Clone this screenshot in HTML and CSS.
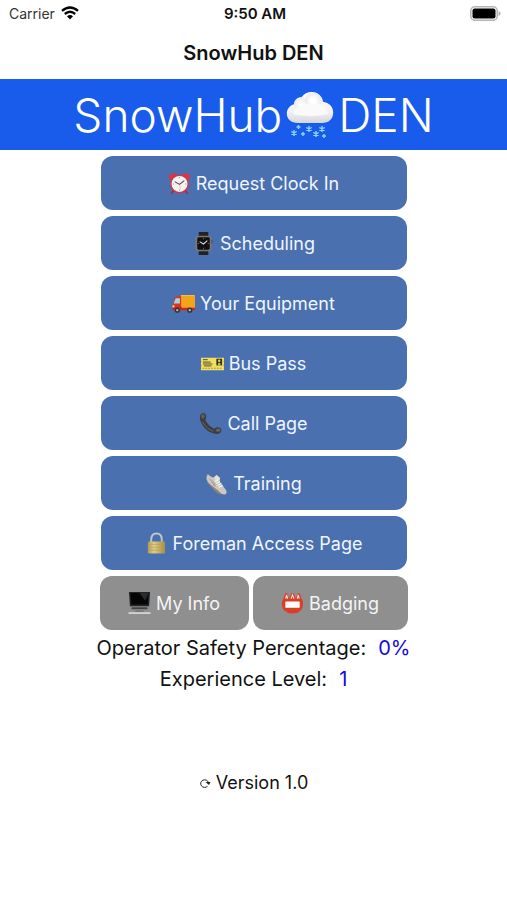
FILE: index.html
```html
<!DOCTYPE html>
<html lang="en">
<head>
<meta charset="utf-8">
<meta name="viewport" content="width=device-width, initial-scale=1">
<title>SnowHub DEN</title>
<link rel="stylesheet" href="styles.css">
</head>
<body>
<div class="status">
  <div class="carrier">
    <span>Carrier</span>
    <svg class="wifi" viewBox="0 0 18 14" aria-hidden="true">
      <path d="M1 4.9Q9-2 17 4.9M3.8 8Q9 3.6 14.2 8" fill="none" stroke="#000" stroke-width="2.3"/>
      <path d="M6 10.3Q9 7.9 12 10.3L9 13.4Z"/>
    </svg>
  </div>
  <time class="clock">9:50 AM</time>
  <svg class="battery" viewBox="0 0 31 15" aria-hidden="true">
    <rect x=".8" y=".8" width="26.4" height="13.4" rx="4" fill="#fff" stroke="#b4b4b4" stroke-width="1.5"/>
    <rect x="2.5" y="2.5" width="23" height="10" rx="2"/>
    <path d="M28.5 5q2.2 1 2.2 2.5t-2.2 2.5z" fill="#b4b4b4"/>
  </svg>
</div>
<header class="nav"><h1>SnowHub DEN</h1></header>
<div class="banner">
  <span>SnowHub</span>
  <svg class="cloud" viewBox="0 0 48 48" aria-hidden="true">
    <defs>
      <linearGradient id="cloudFill" x1="0" y1="0" x2="0" y2="1"><stop offset="0" stop-color="#fff"/><stop offset=".65" stop-color="#f1f1f3"/><stop offset="1" stop-color="#d5d6dc"/></linearGradient>
      <radialGradient id="puff"><stop offset=".3" stop-color="#fff"/><stop offset="1" stop-color="#e9e9ed"/></radialGradient>
    </defs>
    <path d="M12 32C5 32 .8 28 .8 22.500c0-4.500 3-8 7.200-9.300C8.500 8.500 12 6 15.500 6.300 18 2.700 22 .8 26 1c6 .2 10.500 4.500 11 9.800 6 .7 10.200 5 10.200 10.700C47.200 28 42.500 32 36 32z" fill="url(#cloudFill)"/>
    <circle cx="27" cy="10" r="8.500" fill="url(#puff)"/>
    <ellipse cx="15" cy="13" rx="7" ry="6" fill="url(#puff)"/>
    <path d="M8 20q3-5 9-4 5-6 12-3 6-2 10 3l3 7q-17 4-35 0z" fill="#fafafa"/>
    <g stroke="#8fd4ff" stroke-width="1.400">
      <path id="flake" d="M8 39v6M5.300 40.500l5.400 3M5.300 43.500l5.400-3"/>
      <use href="#flake" x="15" y="-4"/><use href="#flake" x="28" y="-4"/><use href="#flake" x="22" y="1"/>
      <path d="M12.500 34v4M10.500 36h4M17 41v4M15 43h4M38 43v4M36 45h4"/>
    </g>
  </svg>
  <span>DEN</span>
</div>
<main class="main">
  <nav class="menu">
    <button class="btn" type="button">
      <svg class="icon" viewBox="0 0 24 24" aria-hidden="true">
        <path d="M6 19l-2.500 4M18 19l2.500 4" stroke="#9b3440" stroke-width="1.800"/>
        <path d="M1 7C0 3 4 0 9 2L3 8zM23 7c1-4-3-7-8-5l6 6z" fill="#dc3548"/>
        <circle cx="12" cy="12.500" r="9.800" fill="#d5354a"/><circle cx="12" cy="12.500" r="8.300" fill="#f4f3ef"/>
        <path d="M12 5.500v1M12 18.500v1M5 12.500h1M18 12.500h1" stroke="#888" stroke-width="1"/>
        <path d="M7 10l5 3 5-4" fill="none" stroke="#464646" stroke-width="1.100"/><path d="M12 13l1 5" stroke="#d99" stroke-width=".6"/>
      </svg><span>Request Clock In</span></button>
    <button class="btn" type="button">
      <svg class="icon" viewBox="0 0 24 24" aria-hidden="true">
        <path d="M7 0h10v24H7z" fill="#202226"/><rect x="3.500" y="4" width="17" height="16" rx="3" fill="#78787a"/><rect x="5.500" y="5.500" width="13" height="13" rx="1.500" fill="#111"/>
        <path d="M20 8h1.500v4H20z" fill="#555"/><path d="M8 10l4 2.500 4-3.500" fill="none" stroke="#ddd" stroke-width="1.100"/>
        <path d="M12 6.500v1M12 16.500v1M6.500 12h1M16.500 12h1" stroke="#999" stroke-width=".8"/>
      </svg><span>Scheduling</span></button>
    <button class="btn" type="button">
      <svg class="icon" viewBox="0 0 24 24" aria-hidden="true">
        <path d="M9 4l1-1h13l1 1v13H9z" fill="#f2a51c"/><path d="M9 4l1-1h13l1 1z" fill="#ffc24a"/><path d="M3 6q.5-1.500 2-1.500h4.500V19H1v-6z" fill="#d93624"/><path d="M3.800 6.500h4.500V12H1.800z" fill="#a5d3df"/>
        <path d="M.5 15h9l1 1.500H24V19H.5z" fill="#ca281d"/><path d="M.5 14h2v2h-2z" fill="#ffe28a"/>
        <g fill="#34353a"><circle cx="5.500" cy="19" r="2.700"/><circle cx="18.500" cy="19" r="2.700"/></g><g fill="#b9babe"><circle cx="5.500" cy="19" r="1.200"/><circle cx="18.500" cy="19" r="1.200"/></g>
      </svg><span>Your Equipment</span></button>
    <button class="btn" type="button">
      <svg class="icon" viewBox="0 0 24 24" aria-hidden="true">
        <path d="M0 6h24v3q-1 1 0 2v2q-1 1 0 2v4H0v-4q1-1 0-2v-2q1-1 0-2z" fill="#f0df61"/>
        <path d="M2 8h5M2 10.500h8M2 12.500h10M3 14.500h8" stroke="#4e4a2f" stroke-width="1"/><path d="M1.500 17h21" stroke="#a89c3c" stroke-width="1" stroke-dasharray="2 1"/>
        <path d="M16 7h6v7h-6z" fill="#37351f"/><circle cx="19" cy="9.200" r="1.300" fill="#e0d05a"/><path d="M17.500 14q0-3 1.500-3t1.500 3" fill="#c5b64d"/>
      </svg><span>Bus Pass</span></button>
    <button class="btn" type="button">
      <svg class="icon" viewBox="0 0 24 24" aria-hidden="true">
        <path d="M1 4Q2 1 5 1q3 1 2.500 5L6.500 8Q9 14 16 17.500l2-1.500q5-.5 5.500 3-.5 3-4 4Q6 22 1 8z" fill="#3b3d40"/>
        <ellipse cx="4" cy="4.500" rx="2" ry="2.500" fill="#595b5e"/><ellipse cx="20" cy="19" rx="2.300" ry="1.700" fill="#626467"/><path d="M3.500 10Q8 18 15 20" fill="none" stroke="#66686b" stroke-width="1"/>
      </svg><span>Call Page</span></button>
    <button class="btn" type="button">
      <svg class="icon" viewBox="0 0 24 24" aria-hidden="true">
        <path d="M3 2q2 3 6 4l3-3 3.500 3v4l6.500 9q1.500 3-1 4.500-3 .5-6-2L3 11Q0 6 3 2z" fill="#cbc8bf"/>
        <path d="M2 8q2 5 7 8t9 7.500q-4 0-7-3L3 12z" fill="#8a8378"/><path d="M9 6l3-3 3.500 3L15 8l-3 1z" fill="#e3e1da"/>
        <path d="M10 10l4-2M11.500 12l4-2M13 14l4-2M14.500 16l4-2" stroke="#f8f7f4" stroke-width="1.100"/><path d="M5 7l5 8M8 9l3 6" stroke="#969188" stroke-width=".8"/>
      </svg><span>Training</span></button>
    <button class="btn" type="button">
      <svg class="icon" viewBox="0 0 24 24" aria-hidden="true">
        <path d="M6.500 11V8q0-6.500 5.500-6.500T17.500 8v3" fill="none" stroke="#bfc5c8" stroke-width="2"/>
        <defs><linearGradient id="brass"><stop stop-color="#b39b4e"/><stop offset=".35" stop-color="#ddce88"/><stop offset="1" stop-color="#a58d43"/></linearGradient></defs>
        <rect x="3" y="10" width="18" height="12.500" rx="1.500" fill="url(#brass)"/><path d="M4 13h16M4 16h16M4 19h16" stroke="#b59c50" stroke-width=".6"/>
      </svg><span>Foreman Access Page</span></button>
    <div class="pair">
      <button class="btn gray info" type="button">
        <svg class="icon" viewBox="0 0 24 24" aria-hidden="true">
          <path d="M1 0h22l-1 15H2z" fill="#242424"/><path d="M2.500 1h19l-1 12h-17z" fill="#050505"/><path d="M12 1h9.500L18 9z" fill="#292b2d"/>
          <path d="M2 15h20l1.500 6H.5z" fill="#8d8f90"/><path d="M4 16h16l.5 2h-17z" fill="#444"/><path d="M8 19h8l.5 2h-9z" fill="#777"/><path d="M.5 21h23v2H.5z" fill="#d0d1d1"/>
        </svg><span>My Info</span></button>
      <button class="btn gray badging" type="button">
        <svg class="icon" viewBox="0 0 24 24" aria-hidden="true">
          <path d="M3 6Q4 1 5.500 1T8 6h1q1-5 3-5t3 5h1q1-5 2.500-5T21 6q2.500 3 2 7.500Q22 22 12 22.500 2 22 1 13.500.5 9 3 6z" fill="#dc3d27"/>
          <path d="M5 7l.8-4L7 7M10.500 7L12 3l1.500 4M17 7l1-4 1 4" fill="none" stroke="#ffd9c9" stroke-width="1.200"/><rect x="4.500" y="10" width="15" height="6.500" rx=".5" fill="#fff"/>
        </svg><span>Badging</span></button>
    </div>
  </nav>
  <dl class="stats">
    <div class="stat"><dt>Operator Safety Percentage:</dt><dd>0%</dd></div>
    <div class="stat"><dt>Experience Level:</dt><dd>1</dd></div>
  </dl>
  <button class="version" type="button">
    <svg class="reload" viewBox="0 0 12 12" aria-hidden="true"><path d="M8.500 9.300A4 3.800 0 1 1 9.500 5.500" fill="none" stroke="#222" stroke-width="1"/><path d="M6.500 5h5L10 8z" fill="#222"/></svg>
    <span>Version 1.0</span>
  </button>
</main>
</body>
</html>
```
FILE: styles.css
```css
* { box-sizing: border-box; }
body { margin: 0; background: #fff; color: #111; font-family: Inter, "Liberation Sans", sans-serif; }
button { border: 0; padding: 0; font: inherit; cursor: pointer; }
svg { display: block; flex: none; }
.status { display: grid; grid-template-columns: 1fr auto 1fr; align-items: center; height: 26px; padding: 0 6px 0 9px; font-size: 14px; }
.carrier { display: flex; align-items: center; gap: 6px; color: #333; }
.wifi { width: 18px; height: 14px; }
.clock { font-size: 15px; font-weight: 600; }
.battery { width: 31px; height: 15px; justify-self: end; }
.nav { display: flex; align-items: center; justify-content: center; height: 53px; }
h1 { margin: 0; font-size: 20px; line-height: 24px; font-weight: 600; }
.banner { display: flex; align-items: center; justify-content: center; gap: 4px; height: 71px; background: #195bea; color: #fff; font-size: 46px; line-height: 60px; font-weight: 300; }
.cloud { width: 48px; height: 48px; }
.main { display: flex; flex-direction: column; align-items: center; padding: 6px 16px; }
.menu { display: flex; flex-direction: column; gap: 6px; width: 100%; max-width: 306px; }
.btn { display: flex; align-items: center; justify-content: center; gap: 5px; height: 54px; border-radius: 12px; background: #4a70af; color: #f0f5ff; font-size: 18px; white-space: nowrap; }
.icon { width: 23px; height: 23px; }
.pair { display: flex; gap: 4px; margin: 0 -1px; }
.gray { background: #8f8f8f; color: #f4f4f4; }
.info { flex: 149; }
.badging { flex: 155; }
.stats { margin: 3px 0 0; font-size: 20px; line-height: 31px; }
.stat { display: flex; justify-content: center; gap: 12px; }
dd { margin: 0; color: #1508e0; }
.version { display: flex; align-items: center; gap: 5px; margin-top: 75px; background: none; color: #111; font-size: 18px; line-height: 26px; }
.reload { width: 12px; height: 12px; }
```
